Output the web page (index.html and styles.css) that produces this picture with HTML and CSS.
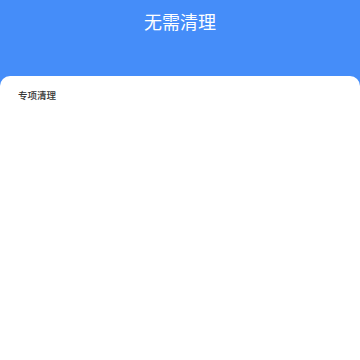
FILE: index.html
```html
<!DOCTYPE html>
<html lang="zh">
<head>
<meta charset="utf-8">
<link rel="stylesheet" href="styles.css">
</head>
<body>
<div class="page">
  <header class="header">
    <h1 class="title">无需清理</h1>
  </header>
  <main class="card">
    <div class="section-title">专项清理</div>
  </main>
</div>
</body>
</html>
```
FILE: styles.css
```css
html, body {
  margin: 0;
  padding: 0;
  height: 100%;
}
body {
  font-family: "Noto Sans CJK SC", "Noto Sans", sans-serif;
  background: #458df9;
}
.page {
  display: flex;
  flex-direction: column;
  height: 360px;
}
.header {
  height: 76px;
  flex: none;
  display: flex;
  justify-content: center;
  background: #458df9;
}
.title {
  margin: 8px 0 0;
  font-size: 18px;
  font-weight: 400;
  line-height: 26px;
  color: #ffffff;
}
.card {
  flex: 1;
  background: #ffffff;
  border-radius: 10px 10px 0 0;
  padding: 12px 18px;
}
.section-title {
  font-size: 9.5px;
  font-weight: 500;
  line-height: 14px;
  color: #333333;
}
```
